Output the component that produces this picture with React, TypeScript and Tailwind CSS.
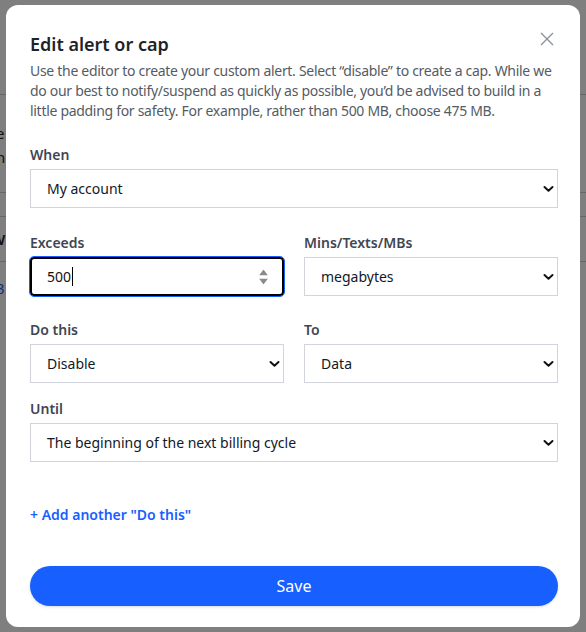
import React from "react";

function SelectBox({ value }: { value: string }) {
  return (
    <div className="relative h-[39px] w-full border border-[#d1d5db] bg-white flex items-center pl-[16px] text-[14px] text-[#111827]">
      <span>{value}</span>
      <svg width="11" height="7" viewBox="0 0 11 7" className="absolute right-[3px] top-1/2 -translate-y-1/2">
        <path d="M1.5 1.5 L5.5 5.2 L9.5 1.5" fill="none" stroke="#111" strokeWidth="2" strokeLinecap="round" strokeLinejoin="round" />
      </svg>
    </div>
  );
}

function Label({ children }: { children: React.ReactNode }) {
  return <div className="text-[14px] leading-[20px] font-semibold text-[#3f4653] mb-[4px]">{children}</div>;
}

export default function App() {
  return (
    <div className="relative h-[632px] w-full overflow-hidden bg-white" style={{ fontFamily: '"Noto Sans", "Open Sans", sans-serif' }}>
      {/* background page */}
      <div className="absolute inset-0 flex flex-col">
        <div className="h-[95px] border-b border-[#ccc]" />
        <div className="h-[98px] border-b border-[#ccc] flex flex-col pt-[26px] text-[15px] leading-[24px] text-[#222]">
          <div className="-ml-[4px]">e</div>
          <div className="-ml-[4px]">n</div>
        </div>
        <div className="h-[24px] border-b border-[#ccc]" />
        <div className="h-[45px] border-b border-[#ccc] flex items-center text-[15px] font-semibold text-[#222]">
          <div className="-ml-[9px]">W</div>
        </div>
        <div className="h-[52px] flex items-center text-[15px] text-[#1760ff]">
          <div className="-ml-[4px]">3</div>
        </div>
      </div>
      <div className="absolute inset-0 bg-black/50 flex items-center justify-center">
        <div className="relative w-[574px] h-[622px] bg-white rounded-[12px] pl-[24px] pr-[22px] pt-[25px]">
          <button className="absolute right-[25px] top-[26px] w-[16px] h-[16px] flex items-center justify-center">
            <svg width="14" height="14" viewBox="0 0 14 14">
              <path d="M1 1 L13 13 M13 1 L1 13" stroke="#8b8f97" strokeWidth="1.3" />
            </svg>
          </button>
          <h2 className="text-[18px] leading-[28px] font-semibold text-[#1f2328]">Edit alert or cap</h2>
          <p className="mt-[3px] text-[14px] leading-[20px] text-[#555b64] tracking-[-0.3px] whitespace-nowrap">
            Use the editor to create your custom alert. Select “disable” to create a cap. While we<br />
            do our best to notify/suspend as quickly as possible, you’d be advised to build in a<br />
            little padding for safety. For example, rather than 500 MB, choose 475 MB.
          </p>

          <div className="mt-[24px]">
            <Label>When</Label>
            <SelectBox value="My account" />
          </div>

          <div className="mt-[25px] grid grid-cols-2 gap-x-[20px]">
            <div>
              <Label>Exceeds</Label>
              <div className="relative h-[39px] w-full border-2 border-black rounded-[4px] outline-1 outline-[#1760ff] bg-white flex items-center pl-[15px] text-[14px] text-[#111]">
                <span>500</span>
                <span className="inline-block w-[1px] h-[19px] bg-black ml-[1px]" />
                <div className="absolute right-[14px] top-1/2 -translate-y-1/2 flex flex-col gap-[3px]">
                  <svg width="9" height="6" viewBox="0 0 9 6"><path d="M4.5 0 L9 6 L0 6 Z" fill="#8a8a8a" /></svg>
                  <svg width="9" height="6" viewBox="0 0 9 6"><path d="M0 0 L9 0 L4.5 6 Z" fill="#8a8a8a" /></svg>
                </div>
              </div>
            </div>
            <div>
              <Label>Mins/Texts/MBs</Label>
              <SelectBox value="megabytes" />
            </div>
          </div>

          <div className="mt-[24px] grid grid-cols-2 gap-x-[20px]">
            <div>
              <Label>Do this</Label>
              <SelectBox value="Disable" />
            </div>
            <div>
              <Label>To</Label>
              <SelectBox value="Data" />
            </div>
          </div>

          <div className="mt-[16px]">
            <Label>Until</Label>
            <SelectBox value="The beginning of the next billing cycle" />
          </div>

          <div className="mt-[43px] text-[14px] leading-[20px] font-semibold text-[#1760ff]">+ Add another "Do this"</div>

          <button className="mt-[41px] w-full h-[40px] rounded-full bg-[#1760ff] text-white text-[16px] shadow-[0_1px_3px_rgba(0,0,0,0.15)]">Save</button>
        </div>
      </div>
    </div>
  );
}
